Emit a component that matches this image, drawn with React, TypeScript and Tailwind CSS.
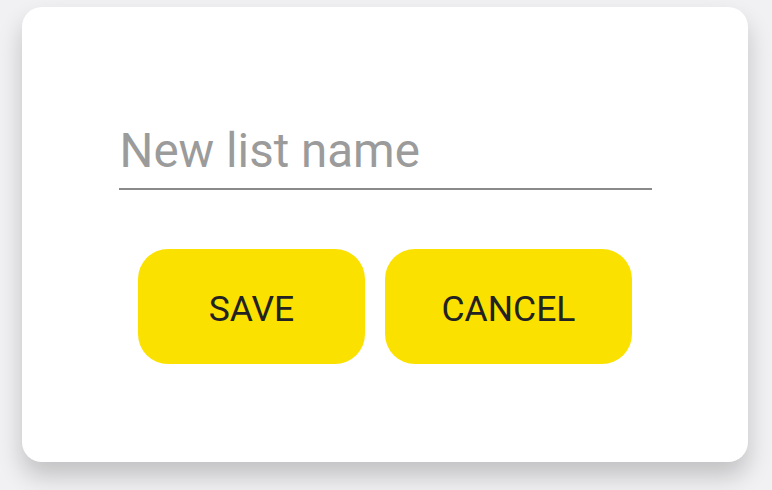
import { useState } from "react";

export default function App() {
  const [name, setName] = useState("");

  return (
    <div className="w-[772px] h-[490px] bg-[#f1f1f3] overflow-hidden font-['Roboto',sans-serif]">
      {/* Dim strip behind the dialog */}
      <div className="h-[7px]" />

      {/* Dialog card */}
      <div className="ml-[22px] w-[726px] h-[455px] rounded-[20px] bg-white shadow-[0_14px_24px_rgba(0,0,0,0.2)] flex flex-col items-center pt-[118px]">
        {/* Name field */}
        <div className="w-[533px] border-b-2 border-[#8a8a8a]">
          <input
            value={name}
            onChange={(e) => setName(e.target.value)}
            placeholder="New list name"
            className="w-full h-[63px] pb-[9px] pl-px text-[47.5px] text-[#333] placeholder:text-[#9b9b9b] outline-none bg-transparent font-['Roboto',sans-serif]"
          />
        </div>

        {/* Actions */}
        <div className="mt-[59px] flex gap-[20px]">
          <button className="w-[227px] h-[115px] pt-[7px] rounded-[30px] bg-[#fbe100] text-[35.5px] text-[#222] uppercase">
            Save
          </button>
          <button className="w-[247px] h-[115px] pt-[7px] rounded-[30px] bg-[#fbe100] text-[35.5px] text-[#222] uppercase">
            Cancel
          </button>
        </div>
      </div>
    </div>
  );
}
